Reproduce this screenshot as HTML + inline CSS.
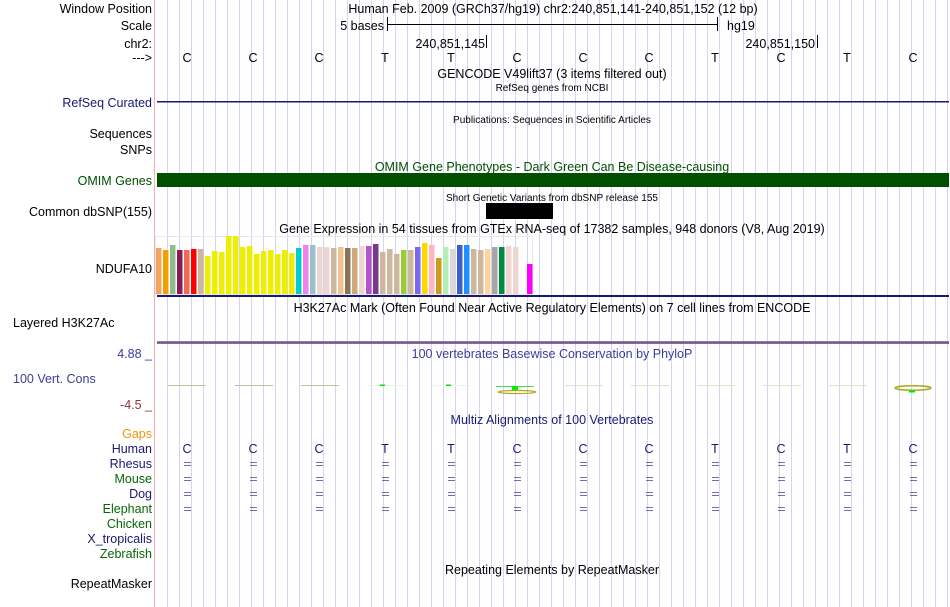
<!DOCTYPE html>
<html><head><meta charset="utf-8"><style>
html,body{margin:0;padding:0;background:#fff;width:950px;height:607px;overflow:hidden}
#g{position:absolute;left:167px;top:0;width:783px;height:607px;background:repeating-linear-gradient(to right,#d4d4f2 0 1px,transparent 1px 12px)}
#p{position:absolute;left:154px;top:0;width:1px;height:607px;background:#f4b0b0}
svg{position:absolute;left:0;top:0}
text{font-family:"Liberation Sans",sans-serif;font-size:12.5px}
.s{font-size:10px}
.r{text-anchor:end}
.c{text-anchor:middle}
</style></head><body>
<div id="g"></div><div id="p"></div>
<svg width="950" height="607" xmlns="http://www.w3.org/2000/svg">
<g fill="#000">
<text x="152" y="13" class="r">Window Position</text>
<text x="152" y="30" class="r">Scale</text>
<text x="152" y="48" class="r">chr2:</text>
<text x="152" y="62" class="r">---&gt;</text>
<text x="152" y="107" class="r" fill="#191970">RefSeq Curated</text>
<text x="152" y="138" class="r">Sequences</text>
<text x="152" y="154" class="r">SNPs</text>
<text x="152" y="185" class="r" fill="#005000">OMIM Genes</text>
<text x="152" y="216" class="r">Common dbSNP(155)</text>
<text x="152" y="273" class="r">NDUFA10</text>
<text x="13" y="327">Layered H3K27Ac</text>
<text x="152" y="358" class="r" fill="#3c3c96">4.88 _</text>
<text x="13" y="383" fill="#3c3c96">100 Vert. Cons</text>
<text x="152" y="409" class="r" fill="#963232">-4.5 _</text>
<text x="152" y="438" class="r" fill="#f0960a">Gaps</text>
<text x="152" y="453" class="r" fill="#191970">Human</text>
<text x="152" y="468" class="r" fill="#191970">Rhesus</text>
<text x="152" y="483" class="r" fill="#0a640a">Mouse</text>
<text x="152" y="498" class="r" fill="#191970">Dog</text>
<text x="152" y="513" class="r" fill="#0a640a">Elephant</text>
<text x="152" y="528" class="r" fill="#0a640a">Chicken</text>
<text x="152" y="543" class="r" fill="#191970">X_tropicalis</text>
<text x="152" y="558" class="r" fill="#0a640a">Zebrafish</text>
<text x="152" y="588" class="r">RepeatMasker</text>
</g>
<text x="553" y="13" class="c">Human Feb. 2009 (GRCh37/hg19)   chr2:240,851,141-240,851,152 (12 bp)</text>
<text x="384" y="30" class="r">5 bases</text>
<path d="M387.5 17v14M717.5 17v14M387 24.5h331M486.5 35v13M817.5 35v13" stroke="#000" fill="none"/>
<text x="727" y="30">hg19</text>
<text x="485" y="48" class="r">240,851,145</text>
<text x="815" y="48" class="r">240,851,150</text>
<g>
<text x="187" y="62" class="c">C</text><text x="253" y="62" class="c">C</text><text x="319" y="62" class="c">C</text><text x="385" y="62" class="c">T</text><text x="451" y="62" class="c">T</text><text x="517" y="62" class="c">C</text><text x="583" y="62" class="c">C</text><text x="649" y="62" class="c">C</text><text x="715" y="62" class="c">T</text><text x="781" y="62" class="c">C</text><text x="847" y="62" class="c">T</text><text x="913" y="62" class="c">C</text>
</g>
<text x="552" y="78" class="c">GENCODE V49lift37 (3 items filtered out)</text>
<text x="552" y="91" class="c s">RefSeq genes from NCBI</text>
<rect x="157" y="101" width="792" height="1.5" fill="#191970"/>
<text x="552" y="123" class="c s">Publications: Sequences in Scientific Articles</text>
<text x="552" y="171" class="c" fill="#005000">OMIM Gene Phenotypes - Dark Green Can Be Disease-causing</text>
<rect x="157" y="173" width="792" height="14" fill="#005000"/>
<text x="552" y="201" class="c s">Short Genetic Variants from dbSNP release 155</text>
<rect x="486" y="203" width="67" height="16" fill="#000"/>
<text x="552" y="233" class="c">Gene Expression in 54 tissues from GTEx RNA-seq of 17382 samples, 948 donors (V8, Aug 2019)</text>
<rect x="155.5" y="236.5" width="377" height="58" fill="none" stroke="#e8e8e8"/>
<g>
<rect x="156" y="248" width="5.5" height="46" fill="#f4a460"/>
<rect x="163" y="250" width="5.5" height="44" fill="#f0a000"/>
<rect x="170" y="245" width="5.5" height="49" fill="#8fbc8f"/>
<rect x="177" y="250" width="5.5" height="44" fill="#8b1a55"/>
<rect x="184" y="250" width="5.5" height="44" fill="#ee6a50"/>
<rect x="191" y="249" width="5.5" height="45" fill="#ff0000"/>
<rect x="198" y="249" width="5.5" height="45" fill="#cdb79e"/>
<rect x="205" y="256" width="5.5" height="38" fill="#eeee00"/>
<rect x="212" y="251" width="5.5" height="43" fill="#eeee00"/>
<rect x="219" y="252" width="5.5" height="42" fill="#eeee00"/>
<rect x="226" y="236" width="5.5" height="58" fill="#eeee00"/>
<rect x="233" y="236" width="5.5" height="58" fill="#eeee00"/>
<rect x="240" y="247" width="5.5" height="47" fill="#eeee00"/>
<rect x="247" y="246" width="5.5" height="48" fill="#eeee00"/>
<rect x="254" y="254" width="5.5" height="40" fill="#eeee00"/>
<rect x="261" y="251" width="5.5" height="43" fill="#eeee00"/>
<rect x="268" y="250" width="5.5" height="44" fill="#eeee00"/>
<rect x="275" y="254" width="5.5" height="40" fill="#eeee00"/>
<rect x="282" y="250" width="5.5" height="44" fill="#eeee00"/>
<rect x="289" y="253" width="5.5" height="41" fill="#eeee00"/>
<rect x="296" y="248" width="5.5" height="46" fill="#00cdcd"/>
<rect x="303" y="245" width="5.5" height="49" fill="#ee82ee"/>
<rect x="310" y="245" width="5.5" height="49" fill="#9ac0cd"/>
<rect x="317" y="247" width="5.5" height="47" fill="#eed5d2"/>
<rect x="324" y="247" width="5.5" height="47" fill="#eed5d2"/>
<rect x="331" y="248" width="5.5" height="46" fill="#cdb79e"/>
<rect x="338" y="247" width="5.5" height="47" fill="#eec591"/>
<rect x="345" y="248" width="5.5" height="46" fill="#8b7355"/>
<rect x="352" y="248" width="5.5" height="46" fill="#cdaa7d"/>
<rect x="359" y="246" width="5.5" height="48" fill="#eed5d2"/>
<rect x="366" y="246" width="5.5" height="48" fill="#b452cd"/>
<rect x="373" y="244" width="5.5" height="50" fill="#7a378b"/>
<rect x="380" y="252" width="5.5" height="42" fill="#cdb79e"/>
<rect x="387" y="249" width="5.5" height="45" fill="#cdb79e"/>
<rect x="394" y="254" width="5.5" height="40" fill="#cdb79e"/>
<rect x="401" y="250" width="5.5" height="44" fill="#9acd32"/>
<rect x="408" y="250" width="5.5" height="44" fill="#cdb79e"/>
<rect x="415" y="247" width="5.5" height="47" fill="#7b68ee"/>
<rect x="422" y="243" width="5.5" height="51" fill="#ffd700"/>
<rect x="429" y="245" width="5.5" height="49" fill="#ffb6c1"/>
<rect x="436" y="258" width="5.5" height="36" fill="#cd9b1d"/>
<rect x="443" y="247" width="5.5" height="47" fill="#b4eeb4"/>
<rect x="450" y="249" width="5.5" height="45" fill="#d9d9d9"/>
<rect x="457" y="245" width="5.5" height="49" fill="#3a5fcd"/>
<rect x="464" y="245" width="5.5" height="49" fill="#1e90ff"/>
<rect x="471" y="249" width="5.5" height="45" fill="#cdb79e"/>
<rect x="478" y="250" width="5.5" height="44" fill="#cdb79e"/>
<rect x="485" y="249" width="5.5" height="45" fill="#ffd39b"/>
<rect x="492" y="247" width="5.5" height="47" fill="#a6a6a6"/>
<rect x="499" y="247" width="5.5" height="47" fill="#008b45"/>
<rect x="506" y="246" width="5.5" height="48" fill="#eed5d2"/>
<rect x="513" y="247" width="5.5" height="47" fill="#eed5d2"/>
<rect x="527" y="264" width="5.5" height="30" fill="#ff00ff"/>
</g>
<rect x="157" y="295" width="792" height="2" fill="#191970"/>
<text x="552" y="312" class="c">H3K27Ac Mark (Often Found Near Active Regulatory Elements) on 7 cell lines from ENCODE</text>
<rect x="157" y="341" width="792" height="1.5" fill="#8080c8"/>
<rect x="157" y="342.5" width="792" height="1.2" fill="#6a2a50"/>
<text x="552" y="358" class="c" fill="#3c3c96">100 vertebrates Basewise Conservation by PhyloP</text>
<g fill="#c8c090">
<rect x="168" y="385" width="38" height="1"/><rect x="235" y="385" width="38" height="1"/><rect x="301" y="385" width="38" height="1"/>
<rect x="367" y="385" width="38" height="1" fill="#e8f4e8"/><rect x="433" y="385" width="38" height="1" fill="#e8f4e8"/>
<rect x="565" y="385" width="38" height="1" fill="#e0e0c8"/><rect x="631" y="385" width="38" height="1" fill="#e0e0c8"/>
<rect x="697" y="385" width="38" height="1" fill="#e0e0c8"/><rect x="763" y="385" width="38" height="1" fill="#e0e0c8"/><rect x="829" y="385" width="38" height="1" fill="#e0e0c8"/>
</g>
<rect x="380" y="384.5" width="5" height="1.5" fill="#00e000"/><rect x="446" y="384.5" width="5" height="1.5" fill="#00e000"/>
<rect x="496" y="386" width="38" height="1" fill="#40e040"/><rect x="512" y="386" width="6" height="5" fill="#00ee00"/>
<ellipse cx="517" cy="392" rx="19" ry="1.5" fill="none" stroke="#b0a820" stroke-width="1.2"/>
<ellipse cx="913" cy="388" rx="18" ry="2.2" fill="none" stroke="#b0a820" stroke-width="1.5"/>
<rect x="909" y="390" width="6" height="2.5" fill="#00ee00"/>
<text x="552" y="424" class="c" fill="#191970">Multiz Alignments of 100 Vertebrates</text>
<g fill="#191970">
<text x="187" y="453" class="c">C</text><text x="253" y="453" class="c">C</text><text x="319" y="453" class="c">C</text><text x="385" y="453" class="c">T</text><text x="451" y="453" class="c">T</text><text x="517" y="453" class="c">C</text><text x="583" y="453" class="c">C</text><text x="649" y="453" class="c">C</text><text x="715" y="453" class="c">T</text><text x="781" y="453" class="c">C</text><text x="847" y="453" class="c">T</text><text x="913" y="453" class="c">C</text>
</g>
<g stroke="#7070b0" stroke-width="1" fill="none">
<path id="eq" d="M184 462.5h7M184 465.5h7M250 462.5h7M250 465.5h7M316 462.5h7M316 465.5h7M382 462.5h7M382 465.5h7M448 462.5h7M448 465.5h7M514 462.5h7M514 465.5h7M580 462.5h7M580 465.5h7M646 462.5h7M646 465.5h7M712 462.5h7M712 465.5h7M778 462.5h7M778 465.5h7M844 462.5h7M844 465.5h7M910 462.5h7M910 465.5h7"/>
<path d="M184 462.5h7M184 465.5h7M250 462.5h7M250 465.5h7M316 462.5h7M316 465.5h7M382 462.5h7M382 465.5h7M448 462.5h7M448 465.5h7M514 462.5h7M514 465.5h7M580 462.5h7M580 465.5h7M646 462.5h7M646 465.5h7M712 462.5h7M712 465.5h7M778 462.5h7M778 465.5h7M844 462.5h7M844 465.5h7M910 462.5h7M910 465.5h7" transform="translate(0,15)"/>
<path d="M184 462.5h7M184 465.5h7M250 462.5h7M250 465.5h7M316 462.5h7M316 465.5h7M382 462.5h7M382 465.5h7M448 462.5h7M448 465.5h7M514 462.5h7M514 465.5h7M580 462.5h7M580 465.5h7M646 462.5h7M646 465.5h7M712 462.5h7M712 465.5h7M778 462.5h7M778 465.5h7M844 462.5h7M844 465.5h7M910 462.5h7M910 465.5h7" transform="translate(0,30)"/>
<path d="M184 462.5h7M184 465.5h7M250 462.5h7M250 465.5h7M316 462.5h7M316 465.5h7M382 462.5h7M382 465.5h7M448 462.5h7M448 465.5h7M514 462.5h7M514 465.5h7M580 462.5h7M580 465.5h7M646 462.5h7M646 465.5h7M712 462.5h7M712 465.5h7M778 462.5h7M778 465.5h7M844 462.5h7M844 465.5h7M910 462.5h7M910 465.5h7" transform="translate(0,45)"/>
</g>
<text x="552" y="574" class="c">Repeating Elements by RepeatMasker</text>
</svg>
</body></html>
